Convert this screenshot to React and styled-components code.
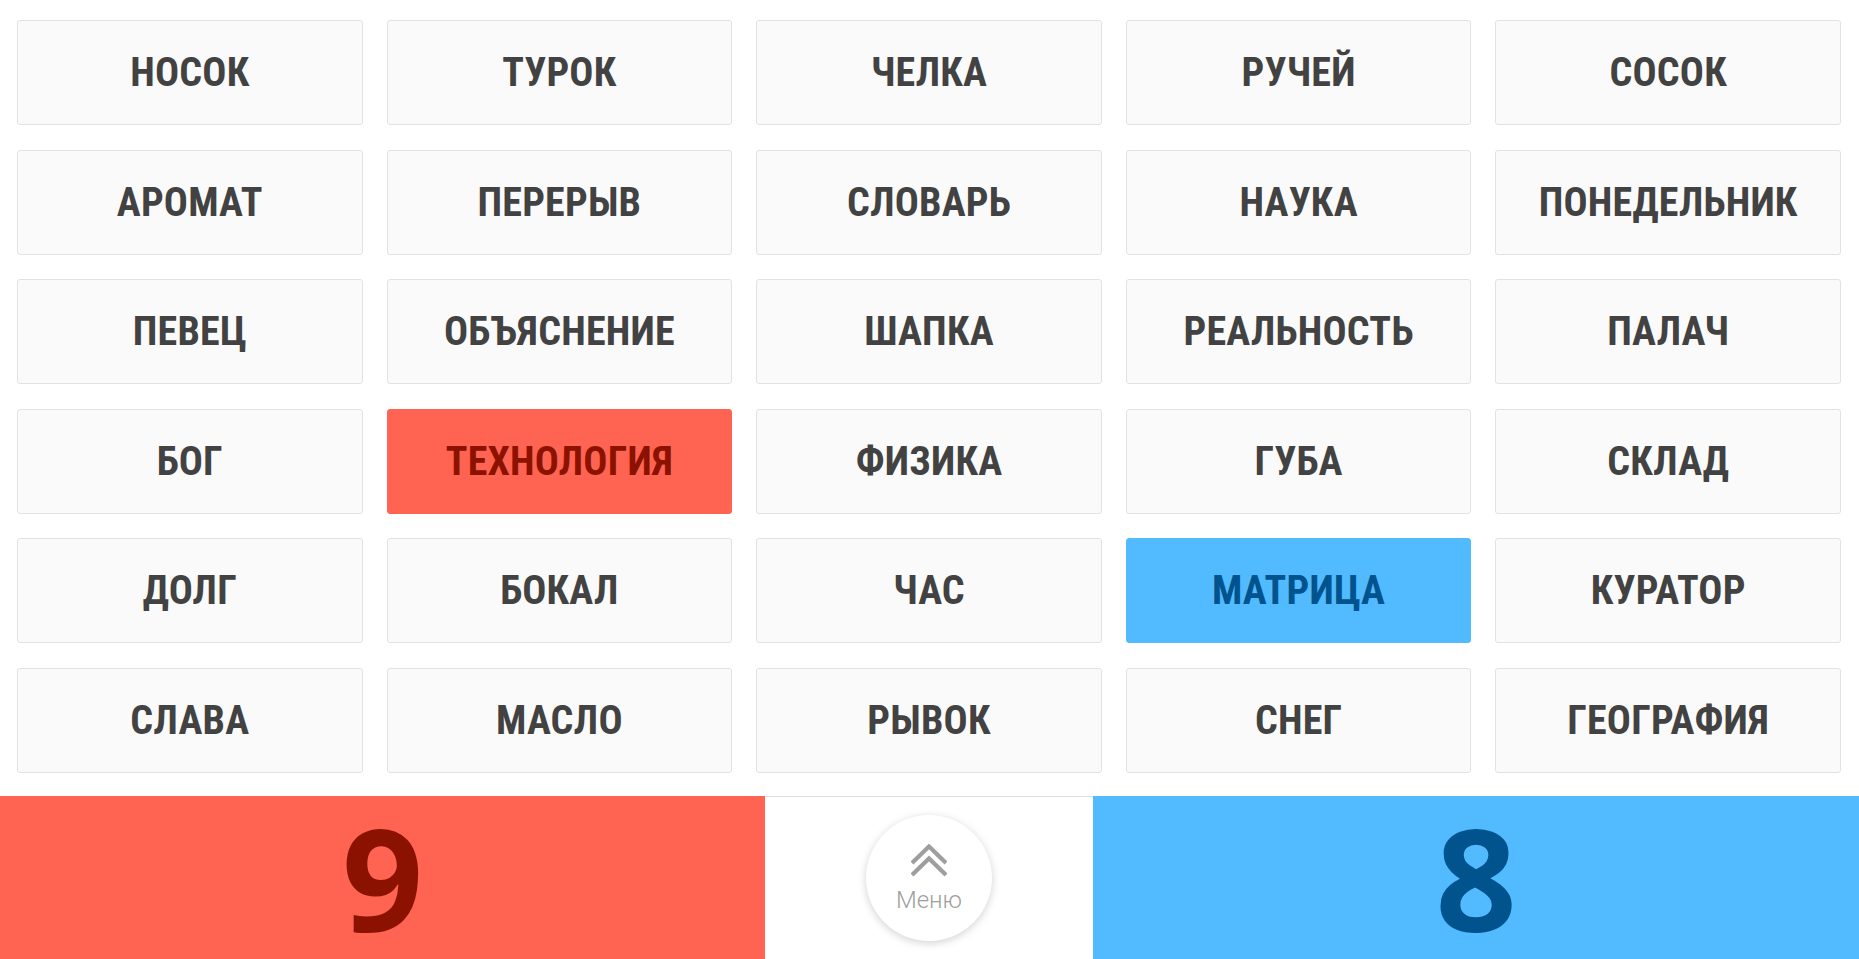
import React from "react";
import styled, { createGlobalStyle } from "styled-components";

const GlobalStyle = createGlobalStyle`
    html, body {
        margin: 0;
        padding: 0;
        background: #ffffff;
        font-family: "Roboto Condensed", Roboto, "Liberation Sans", sans-serif;
    }
`

const words = [
    ["НОСОК", "ТУРОК", "ЧЕЛКА", "РУЧЕЙ", "СОСОК"],
    ["АРОМАТ", "ПЕРЕРЫВ", "СЛОВАРЬ", "НАУКА", "ПОНЕДЕЛЬНИК"],
    ["ПЕВЕЦ", "ОБЪЯСНЕНИЕ", "ШАПКА", "РЕАЛЬНОСТЬ", "ПАЛАЧ"],
    ["БОГ", "ТЕХНОЛОГИЯ", "ФИЗИКА", "ГУБА", "СКЛАД"],
    ["ДОЛГ", "БОКАЛ", "ЧАС", "МАТРИЦА", "КУРАТОР"],
    ["СЛАВА", "МАСЛО", "РЫВОК", "СНЕГ", "ГЕОГРАФИЯ"],
]

const opened = {
    "ТЕХНОЛОГИЯ": "red",
    "МАТРИЦА": "blue",
}

function App() {
    return (
        <>
            <GlobalStyle/>
            <Page>
                <Board>
                    {words.flat().map((word) => (
                        <Card key={word} $team={opened[word]}>
                            <Word>{word}</Word>
                        </Card>
                    ))}
                </Board>
                <Footer>
                    <Score $team="red">9</Score>
                    <MenuCell>
                        <MenuButton>
                            <svg width="36" height="33" viewBox="0 0 36 33" fill="none">
                                <polyline points="1,19 18,2.5 35,19" stroke="#9e9e9e" strokeWidth="4.2"/>
                                <polyline points="1,31 18,14.5 35,31" stroke="#9e9e9e" strokeWidth="4.2"/>
                            </svg>
                            <span>Меню</span>
                        </MenuButton>
                    </MenuCell>
                    <Score $team="blue">8</Score>
                </Footer>
            </Page>
        </>
    );
}

export default App;

const colors = {
    red: {bg: "#ff6452", fg: "#8c1200"},
    blue: {bg: "#52baff", fg: "#00538c"},
}

const Page = styled.div`
    width: 1859px;
    height: 959px;
    display: flex;
    flex-direction: column;
    overflow: hidden;
`

const Board = styled.div`
    display: grid;
    grid-template-columns: repeat(5, 1fr);
    grid-auto-rows: 105px;
    column-gap: 24px;
    row-gap: 24.5px;
    padding: 20px 18px 0 17px;
    height: 776px;
    box-sizing: border-box;
`

const Card = styled.div`
    display: flex;
    align-items: center;
    justify-content: center;
    box-sizing: border-box;
    border-radius: 3px;
    border: 1px solid ${({$team}) => $team ? colors[$team].bg : "#e2e2e2"};
    background: ${({$team}) => $team ? colors[$team].bg : "#fafafa"};
    color: ${({$team}) => $team ? colors[$team].fg : "#424242"};
`

const Word = styled.span`
    font-size: 40px;
    font-weight: 700;
    font-stretch: condensed;
    letter-spacing: 0.2px;
`

const Footer = styled.div`
    flex: 1;
    display: grid;
    grid-template-columns: 765px 1fr 766px;
    margin-top: 20px;
    border-top: 1px solid #e0e0e0;
`

const Score = styled.div`
    display: flex;
    align-items: center;
    justify-content: center;
    background: ${({$team}) => colors[$team].bg};
    color: ${({$team}) => colors[$team].fg};
    font-family: "Open Sans", Roboto, sans-serif;
    font-size: 142px;
    font-weight: 700;
    line-height: 1;
    margin-top: -1px;
    padding-bottom: 2px;
`

const MenuCell = styled.div`
    display: flex;
    align-items: center;
    justify-content: center;
    background: #ffffff;
`

const MenuButton = styled.div`
    width: 126px;
    height: 126px;
    border-radius: 50%;
    background: #ffffff;
    box-shadow: 0 2px 8px rgba(0, 0, 0, 0.18);
    display: flex;
    flex-direction: column;
    align-items: center;
    justify-content: center;
    gap: 11px;
    color: #9e9e9e;
    span {
        font-family: Roboto, "Liberation Sans", sans-serif;
        font-weight: 300;
        font-size: 24px;
        line-height: 1;
    }
`
